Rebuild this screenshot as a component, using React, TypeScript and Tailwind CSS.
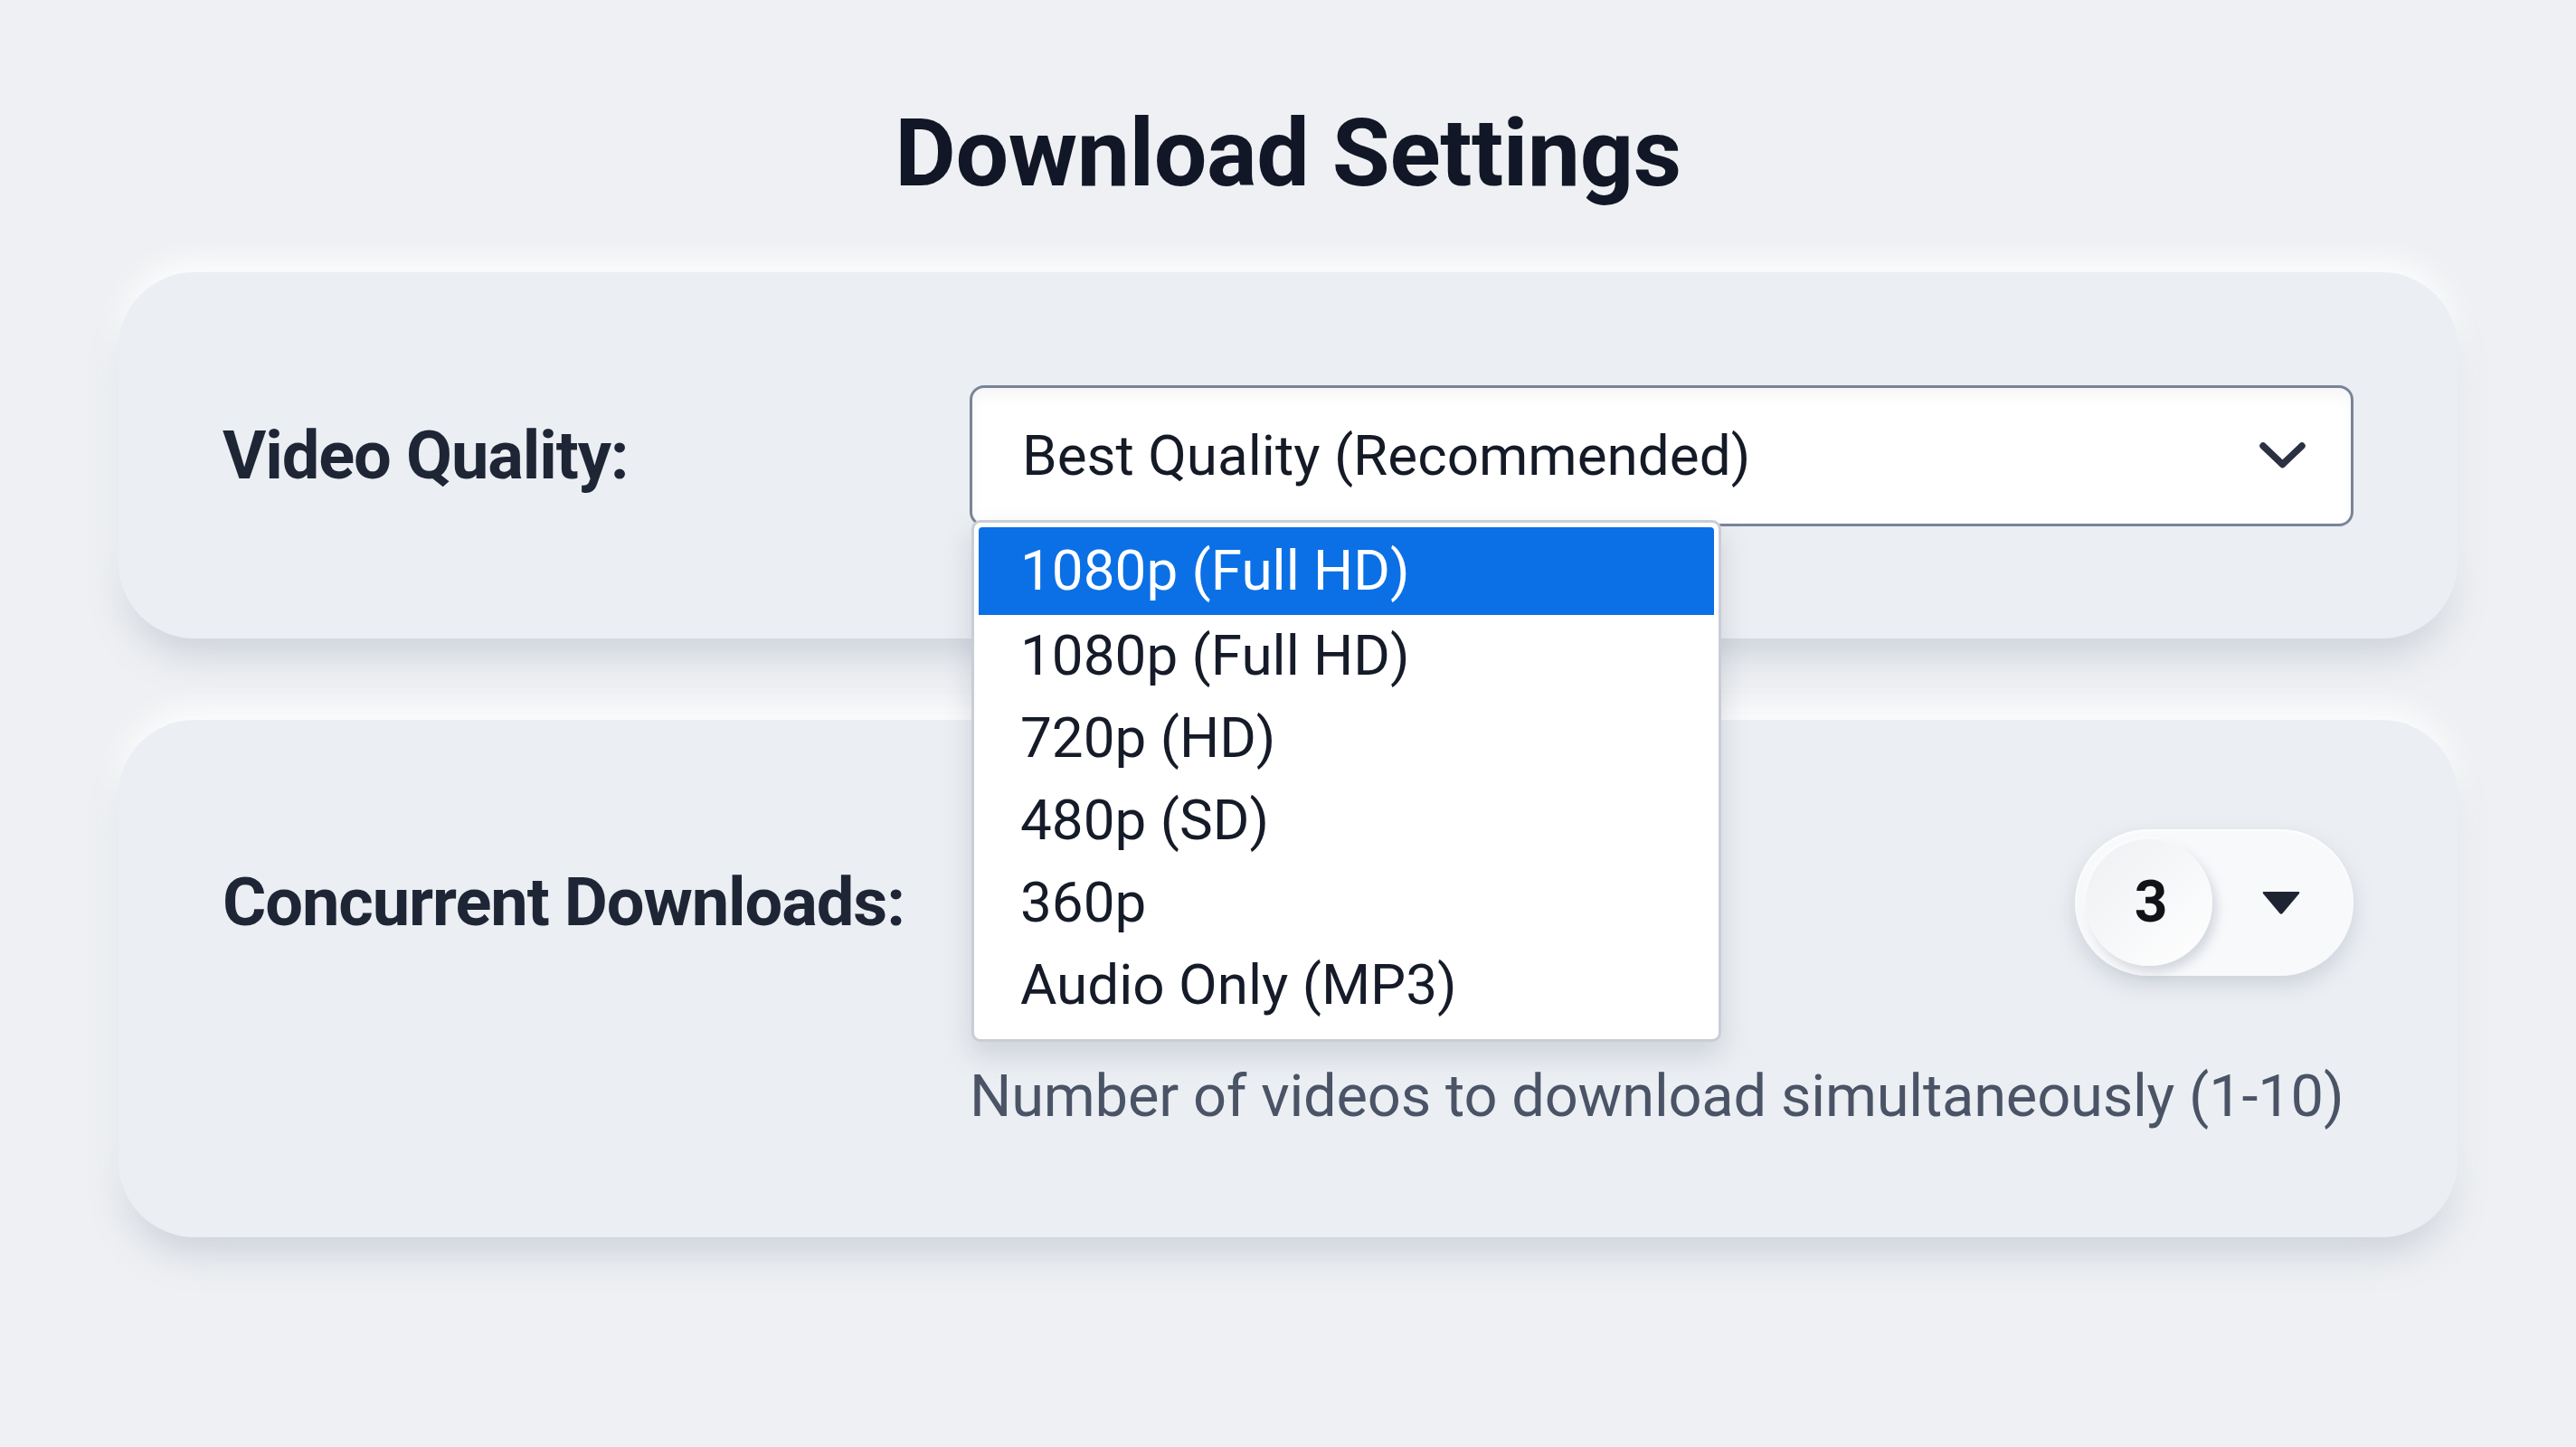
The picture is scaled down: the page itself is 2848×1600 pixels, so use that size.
import React from "react";

const options = [
  "1080p (Full HD)",
  "1080p (Full HD)",
  "720p (HD)",
  "480p (SD)",
  "360p",
  "Audio Only (MP3)",
];

export default function App() {
  return (
    <div className="w-full min-h-[1600px] bg-[#eef0f3] font-['Roboto','Liberation_Sans',sans-serif] px-[131px] pt-[118px]">
      <h1 className="text-center text-[104px] leading-none font-bold tracking-[-0.004em] text-[#111726]">
        Download Settings
      </h1>

      {/* Card 1 */}
      <div className="mt-[79px] h-[405px] rounded-[84px] bg-[#ebeef2] px-[115px] grid grid-cols-[826px_1fr] items-center shadow-[0_26px_40px_-10px_rgba(140,150,170,0.35),0_-14px_30px_rgba(255,255,255,0.85)] relative z-10">
        <div className="text-[74px] leading-none font-bold text-[#1e2636] tracking-[-0.015em]">
          Video Quality:
        </div>
        <div className="relative">
          <div className="h-[156px] rounded-[16px] border-[3px] border-[#7a8497] bg-white shadow-[inset_0_10px_14px_rgba(0,0,0,0.035)] flex items-center justify-between pl-[55px] pr-[50px]">
            <span className="text-[62px] leading-none text-[#141a26]">
              Best Quality (Recommended)
            </span>
            <svg width="51" height="29" viewBox="0 0 51 29" className="block">
              <polyline
                points="4,4 25.5,24.5 47,4"
                fill="none"
                stroke="#2b3142"
                strokeWidth="7.5"
                strokeLinecap="round"
                strokeLinejoin="round"
              />
            </svg>
          </div>

          {/* Dropdown */}
          <div className="absolute top-[149px] left-[2px] w-[829px] rounded-[10px] border-[3px] border-[#c9ced6] bg-white pt-[5px] pb-[14px] px-[5px] shadow-[0_14px_30px_rgba(100,110,130,0.22)]">
            {options.map((o, i) => (
              <div
                key={i}
                className={
                  i === 0
                    ? "h-[97px] rounded-t-[4px] bg-[#0b70e6] text-white flex items-center pl-[46px] text-[62px] leading-none"
                    : "h-[91px] text-[#151b28] flex items-center pl-[46px] text-[62px] leading-none"
                }
              >
                {o}
              </div>
            ))}
          </div>
        </div>
      </div>

      {/* Card 2 */}
      <div className="mt-[90px] h-[572px] rounded-[84px] bg-[#ebeef2] px-[115px] pt-[121px] grid grid-cols-[826px_1fr] content-start shadow-[0_26px_40px_-10px_rgba(140,150,170,0.35),0_-14px_30px_rgba(255,255,255,0.85)]">
        <div className="flex items-center text-[74px] leading-none font-bold text-[#1e2636] tracking-[-0.015em]">
          Concurrent Downloads:
        </div>
        <div className="flex justify-end">
          <div className="w-[308px] h-[162px] rounded-full bg-[#f8f9fb] flex items-center pl-[12px] shadow-[0_10px_22px_rgba(130,140,160,0.28),inset_0_2px_3px_rgba(255,255,255,0.9)]">
            <div className="w-[140px] h-[140px] rounded-full bg-gradient-to-br from-[#eef0f3] to-[#ffffff] flex items-center justify-center shadow-[5px_7px_12px_rgba(120,130,150,0.28),-2px_-2px_4px_rgba(255,255,255,0.9)]">
              <span className="text-[64px] leading-none font-bold text-[#111318] ml-[4px]">3</span>
            </div>
            <div className="flex-1 flex items-center justify-center pr-[4px]">
              <svg width="44" height="27" viewBox="0 0 44 27" className="block">
                <path d="M3 1 L41 1 Q43 1 42 3 L23.5 25 Q22 26.5 20.5 25 L2 3 Q1 1 3 1 Z" fill="#1f2433" />
              </svg>
            </div>
          </div>
        </div>
        <div />
        <div className="mt-[101px] text-[65px] leading-none text-[#4a5466] tracking-[-0.003em]">
          Number of videos to download simultaneously (1-10)
        </div>
      </div>
    </div>
  );
}
